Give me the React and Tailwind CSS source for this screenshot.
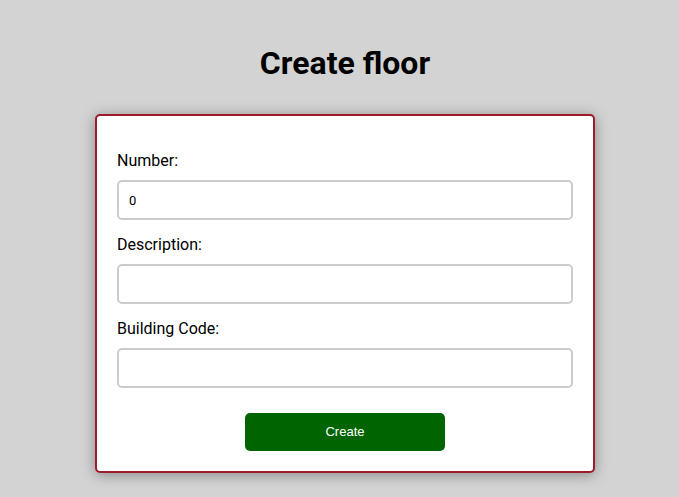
import React, { useState } from 'react'

export default function App() {
    const [number, setNumber] = useState(0);
    const [description, setDescription] = useState('');
    const [buildingCode, setBuildingCode] = useState('');

    const inputCls = "block w-full h-[40px] border-2 border-[#cccccc] rounded-[5px] px-[10px] text-[13px] text-black bg-white outline-none";

    return (
        <div className="min-h-[497px] w-full bg-[#d3d3d3] pt-[45px] pl-[95px]" style={{ fontFamily: 'Roboto, sans-serif' }}>
            <div className="w-[500px]">
                <h1 className="text-[32px] font-bold leading-[37px] text-black text-center">Create floor</h1>

                <form onSubmit={(e) => e.preventDefault()}
                    className="mt-[32px] bg-white border-2 border-[#9e1b2b] rounded-[5px] px-[20px] pt-[35px] pb-[20px] shadow-[0_2px_14px_rgba(0,0,0,0.35)]">
                    <label className="block text-[16px] leading-[19px] text-black mb-[10px]">Number:</label>
                    <input type="number" value={number} onChange={(e) => setNumber(e.target.value)} className={inputCls + " mb-[15px]"} />

                    <label className="block text-[16px] leading-[19px] text-black mb-[10px]">Description:</label>
                    <input type="text" value={description} onChange={(e) => setDescription(e.target.value)} className={inputCls + " mb-[15px]"} />

                    <label className="block text-[16px] leading-[19px] text-black mb-[10px]">Building Code:</label>
                    <input type="text" value={buildingCode} onChange={(e) => setBuildingCode(e.target.value)} className={inputCls} />

                    <div className="flex justify-center mt-[25px]">
                        <button type="submit" className="w-[200px] h-[38px] bg-[#006400] text-white text-[13px] rounded-[5px]" style={{ fontFamily: '"Liberation Sans", Arial, sans-serif' }}>Create</button>
                    </div>
                </form>
            </div>
        </div>
    );
}
